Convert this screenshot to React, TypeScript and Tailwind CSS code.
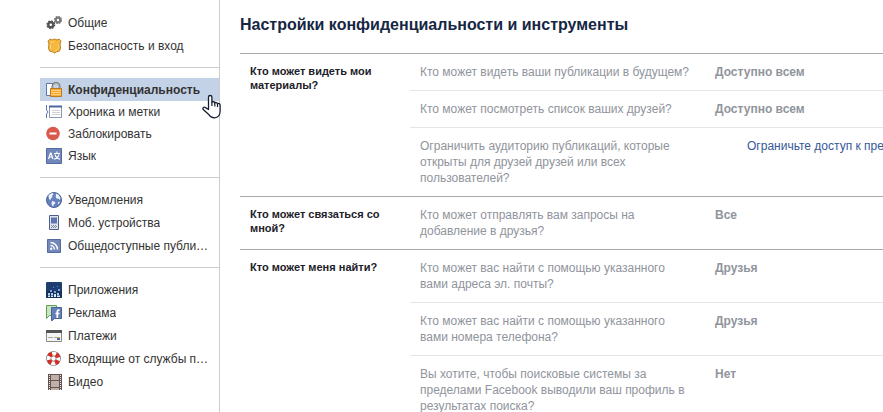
import type { ReactNode } from "react";
import clsx from "clsx";

type NavItem = { label: string; icon: ReactNode; active?: boolean };
type Row = { question: string; value?: string; action?: string };
type Section = { title: string; rows: Row[] };

function Icon({ children }: { children: ReactNode }) {
  return (
    <svg viewBox="0 0 16 16" className="h-4 w-4 shrink-0" aria-hidden>
      {children}
    </svg>
  );
}

const gears = (
  <Icon>
    <circle cx="4.800" cy="9.800" r="2.500" fill="none" stroke="#555" strokeWidth="2.400" />
    <circle cx="4.800" cy="9.800" r="3.800" fill="none" stroke="#555" strokeWidth="1.400" strokeDasharray="1.600 1.380" />
    <circle cx="12" cy="5" r="2.300" fill="none" stroke="#777" strokeWidth="2.200" />
    <circle cx="12" cy="5" r="3.400" fill="none" stroke="#777" strokeWidth="1.400" strokeDasharray="1.500 1.170" />
  </Icon>
);

const badge = (
  <Icon>
    <path
      d="M4 1 6 2 8.500 1 11 2 13 1 15 3.200 14 6 14.500 10 13.500 13 10.500 13.800 8.500 15 6.500 13.800 3.500 13 2.500 10 3 6 2 3.200Z"
      fill="#f8b840"
      stroke="#b98124"
    />
    <path d="M5 4h3M4.500 6v5" stroke="#fbd47e" />
    <path d="M9 13c3-1 4-3 3.500-7" stroke="#f9cc70" fill="none" />
  </Icon>
);

const lock = (
  <Icon>
    <path d="M.5 1.500h6v12h-6z" fill="#fff" stroke="#5d76ad" />
    <path d="M6.500 8V4.500a3.500 3.500 0 0 1 7 0V8" fill="none" stroke="#777" strokeWidth="2" />
    <path d="M7 8V4.500a3 3 0 0 1 6 0V8" fill="none" stroke="#ddd" strokeWidth=".7" />
    <path d="M4.500 6.500h11v8h-11z" fill="#f5a936" stroke="#b97b1d" />
    <path d="M5 8.500h10M5 10.500h10M5 12.500h10" stroke="#ffd17a" />
  </Icon>
);

const timeline = (
  <Icon>
    <path d="M.5 1v5l1.500 2-1.500 2v4" fill="none" stroke="#5d76ad" />
    <path d="M3.500 2.500h12v11h-12z" fill="#fff" stroke="#8796b5" />
    <path d="M3 2.500h13" stroke="#4b669f" strokeWidth="2" />
    <path d="M6 6.500h8M6 8.500h8M6 10.500h8" stroke="#d0d0d0" />
  </Icon>
);

const blocked = (
  <Icon>
    <circle cx="7" cy="7.500" r="6.800" fill="#d9594c" />
    <path d="M3.500 7.500h7" stroke="#fff" strokeWidth="2" />
  </Icon>
);

const language = (
  <Icon>
    <path d="M.5.5h15v15H.5z" fill="#7186b9" stroke="#526ba5" />
    <path d="m2.500 11 2-6h.5l2 6M3.200 9h3" fill="none" stroke="#fff" strokeWidth="1.200" />
    <path d="M8 5.500h6M11 3.500v2M9 6.500c.6 2.400 2.500 4 5 4.700M13 6.500c-.6 2.400-2.500 4-5 4.700" fill="none" stroke="#fff" strokeWidth="1.100" />
  </Icon>
);

const globe = (
  <Icon>
    <circle cx="8" cy="8" r="7.500" fill="#6480bd" stroke="#48629c" />
    <path d="m2.500 3.500 2-1.800 2.500-.6.500 1.400L6 3.500 6.500 5 5 6.200 4.500 8 3 7z" fill="#eef2f9" />
    <path d="m10 1.500 2.500 1.200L14.500 6l-.7 2-1.500-1.500-1.600.2-1-2z" fill="#eef2f9" />
    <path d="m6 9 2.800.8.700 1.400-1.800 1.400-.5 1.900-1.200-1-.5-2.300z" fill="#eef2f9" />
    <path d="m12.500 9.800 1.500.2-1.500 2.300-.8-1z" fill="#eef2f9" />
  </Icon>
);

const phone = (
  <Icon>
    <path d="M3.500.5h9v14h-9z" fill="#dfe3ee" stroke="#4d6089" />
    <path d="M5 2.500h6v6H5z" fill="#5c76b1" />
    <path d="M5 10.500h6M5 12.500h6" stroke="#7b849b" strokeDasharray="1 1" />
    <path d="M6 11.500h5" stroke="#7b849b" strokeDasharray="1 1" />
  </Icon>
);

const feed = (
  <Icon>
    <path d="M1.500 1.500h13v13h-13z" fill="#7388b9" stroke="#526ba5" />
    <path d="M4.500 4.500a7 7 0 0 1 7 7M4.500 7.500a4 4 0 0 1 4 4" fill="none" stroke="#fff" strokeWidth="1.500" />
    <circle cx="5.200" cy="10.800" r="1.200" fill="#fff" />
  </Icon>
);

const apps = (
  <Icon>
    <rect width="16" height="16" rx="1" fill="#1f3d70" />
    <path d="M0 9h16v6a1 1 0 0 1-1 1H1a1 1 0 0 1-1-1z" fill="#18305c" />
    <path d="M2 11h2v2H2zM5 11h2v2H5zM11 11h2v2h-2z" fill="#a9cdec" />
    <path d="M4 8h2v2H4zM8 9h2v2H8zM12 7h2v2h-2z" fill="#76a9d8" />
    <path d="M2 13.500h2V15H2zM5 13.500h2V15H5zM8 12h2v3H8zM11 13.500h3V15h-3z" fill="#d6eafb" />
    <path d="M7 5h1v1H7zM11 4h1v1h-1z" fill="#5b90c6" />
  </Icon>
);

const ads = (
  <Icon>
    <path d="M.5.500h10v10h-7l-3 3z" fill="#c9e5bd" stroke="#649d58" />
    <path d="M5.500 2.500h10v11h-7l-3 2.500z" fill="#6681ba" stroke="#47629c" />
    <path d="M13.500 5.200h-.8c-1 0-1.400.5-1.400 1.500V13M9.500 8.500h4" fill="none" stroke="#fff" strokeWidth="1.700" />
  </Icon>
);

const card = (
  <Icon>
    <path d="M.5 2.500h15v11H.5z" fill="#f4f4f4" stroke="#888" />
    <path d="M0 3.500h16" stroke="#555" strokeWidth="3" />
    <path d="M2 9.500h5M8 9.500h3" stroke="#aaa" />
    <path d="M11 9.500h3" stroke="#dda33a" />
    <path d="M11 11h3" stroke="#4767a5" strokeWidth="2" />
  </Icon>
);

// four red segments sit on the white ring
const lifebuoy = (
  <Icon>
    <circle cx="7.500" cy="7.500" r="4.800" fill="none" stroke="#666" strokeWidth="5" />
    <circle cx="7.500" cy="7.500" r="4.800" fill="none" stroke="#fff" strokeWidth="3.800" />
    <circle cx="7.500" cy="7.500" r="4.800" fill="none" stroke="#d62c22" strokeWidth="4.400" strokeDasharray="3.770 3.770" strokeDashoffset="-1.900" />
  </Icon>
);

const film = (
  <Icon>
    <path d="M2 0h14v16H2z" fill="#63534e" />
    <path d="M5 1h8v5H5zM5 7h8v6H5zM5 14h8v2H5z" fill="#bfb0aa" />
    <path d="M3.500 1v15M14.500 1v15" stroke="#eee" strokeWidth="1" strokeDasharray="1 1" />
  </Icon>
);

const groups: NavItem[][] = [
  [
    { label: "Общие", icon: gears },
    { label: "Безопасность и вход", icon: badge },
  ],
  [
    { label: "Конфиденциальность", icon: lock, active: true },
    { label: "Хроника и метки", icon: timeline },
    { label: "Заблокировать", icon: blocked },
    { label: "Язык", icon: language },
  ],
  [
    { label: "Уведомления", icon: globe },
    { label: "Моб. устройства", icon: phone },
    { label: "Общедоступные публи…", icon: feed },
  ],
  [
    { label: "Приложения", icon: apps },
    { label: "Реклама", icon: ads },
    { label: "Платежи", icon: card },
    { label: "Входящие от службы п…", icon: lifebuoy },
    { label: "Видео", icon: film },
  ],
];

const sections: Section[] = [
  {
    title: "Кто может видеть мои материалы?",
    rows: [
      { question: "Кто может видеть ваши публикации в будущем?", value: "Доступно всем" },
      { question: "Кто может посмотреть список ваших друзей?", value: "Доступно всем" },
      {
        question: "Ограничить аудиторию публикаций, которые открыты для друзей друзей или всех пользователей?",
        action: "Ограничьте доступ к прежним",
      },
    ],
  },
  {
    title: "Кто может связаться со мной?",
    rows: [{ question: "Кто может отправлять вам запросы на добавление в друзья?", value: "Все" }],
  },
  {
    title: "Кто может меня найти?",
    rows: [
      { question: "Кто может вас найти с помощью указанного вами адреса эл. почты?", value: "Друзья" },
      { question: "Кто может вас найти с помощью указанного вами номера телефона?", value: "Друзья" },
      {
        question: "Вы хотите, чтобы поисковые системы за пределами Facebook выводили ваш профиль в результатах поиска?",
        value: "Нет",
      },
    ],
  },
];

function HandCursor() {
  return (
    <svg viewBox="0 0 19 25" className="pointer-events-none absolute top-4 -right-0.5 h-[25px] w-[19px]" aria-hidden>
      <path
        d="M6.500 15.500V3.200a1.700 1.700 0 0 1 3.400 0V8.500c.8-1.300 2.700-.9 2.900.5.900-1 2.500-.5 2.700.8 1-.8 2.600-.2 2.600 1.400V17c0 4-2 6.800-5.600 6.800-3.200 0-4.600-1.300-6-3.600L1.200 15.600c-.9-1.700.8-3.100 2.300-2z"
        fill="#fff"
        stroke="#151d33"
        strokeWidth="1.300"
        strokeLinejoin="round"
      />
      <path d="M9.900 8.500V12M12.800 9v3.500M15.500 10v3" stroke="#151d33" strokeWidth="1.200" />
    </svg>
  );
}

function NavLink({ item }: { item: NavItem }) {
  return (
    <li className="relative min-w-0">
      <a
        href="#"
        aria-current={item.active ? "page" : undefined}
        className={clsx(
          "flex h-full items-center gap-1.5 pr-2 pl-1.5",
          item.active && "bg-[#c4d2e7] font-bold"
        )}
      >
        {item.icon}
        <span className="truncate">{item.label}</span>
      </a>
      {item.active && <HandCursor />}
    </li>
  );
}

export default function App() {
  return (
    <div className="flex h-screen overflow-hidden bg-white font-['Liberation_Sans',Arial,sans-serif] text-xs text-[#333]">
      <nav className="ml-10 w-[180px] shrink-0 border-r border-[#ccc] pt-px">
        {groups.map((items, i) => (
          <ul
            key={items[0].label}
            className={clsx(
              "grid grid-cols-1 py-2.5",
              i > 0 && "border-t border-[#ccc]",
              i === 1 ? "auto-rows-[22px] grid-rows-[23px]" : "auto-rows-[23px]"
            )}
          >
            {items.map((item) => (
              <NavLink key={item.label} item={item} />
            ))}
          </ul>
        ))}
      </nav>

      <main className="ml-5 min-w-0 flex-1">
        <h1 className="pt-[15px] pb-[18px] text-base leading-5 font-bold whitespace-nowrap text-[#162643]">
          Настройки конфиденциальности и инструменты
        </h1>
        {sections.map((section) => (
          <section key={section.title} className="flex border-t border-[#aaa]">
            <h2 className="w-[170px] shrink-0 px-2.5 py-2.5 text-[11px] leading-3.5 font-bold text-[#1d2129]">
              {section.title}
            </h2>
            <ul className="min-w-0 flex-1 divide-y divide-[#e5e5e5] leading-4 text-[#90949c]">
              {section.rows.map((row) => (
                <li key={row.question} className="flex py-2.5 pl-2.5">
                  <p className="w-[275px] shrink-0">{row.question}</p>
                  {row.value && <strong className="ml-5">{row.value}</strong>}
                  {row.action && (
                    <a href="#" className="ml-[52px] whitespace-nowrap text-[#365899]">
                      {row.action}
                    </a>
                  )}
                </li>
              ))}
            </ul>
          </section>
        ))}
      </main>
    </div>
  );
}
